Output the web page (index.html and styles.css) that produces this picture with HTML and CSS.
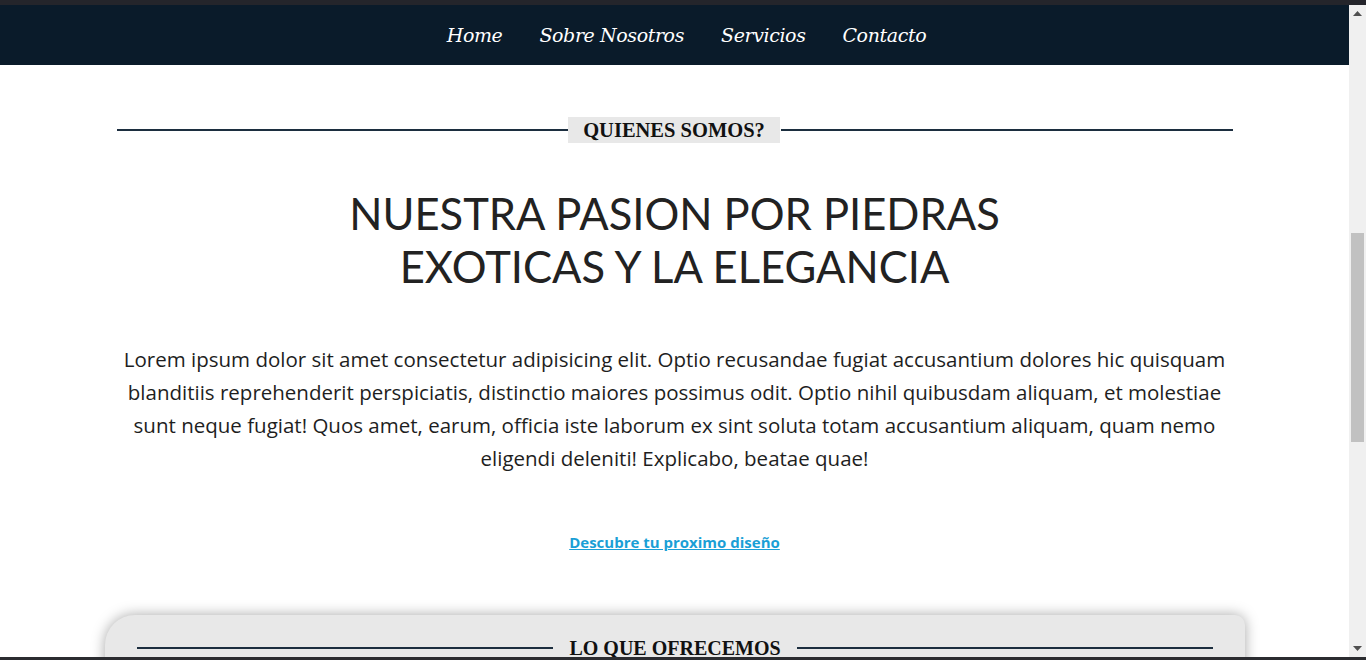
FILE: index.html
```html
<!DOCTYPE html>
<html lang="es">
<head>
<meta charset="utf-8">
<title>Quienes somos</title>
<link rel="stylesheet" href="styles.css">
</head>
<body>
<div class="screen">
  <div class="top-strip"></div>
  <div class="viewport">
    <div class="page">
      <nav class="nav">
        <a href="#" class="nav-link">Home</a>
        <a href="#" class="nav-link">Sobre Nosotros</a>
        <a href="#" class="nav-link">Servicios</a>
        <a href="#" class="nav-link">Contacto</a>
      </nav>
      <section class="about">
        <div class="section-title">
          <span class="rule"></span>
          <h3 class="section-label boxed">QUIENES SOMOS?</h3>
          <span class="rule"></span>
        </div>
        <h1 class="headline">NUESTRA PASION POR PIEDRAS<br>EXOTICAS Y LA ELEGANCIA</h1>
        <p class="lead">Lorem ipsum dolor sit amet consectetur adipisicing elit. Optio recusandae fugiat accusantium dolores hic quisquam blanditiis reprehenderit perspiciatis, distinctio maiores possimus odit. Optio nihil quibusdam aliquam, et molestiae sunt neque fugiat! Quos amet, earum, officia iste laborum ex sint soluta totam accusantium aliquam, quam nemo eligendi deleniti! Explicabo, beatae quae!</p>
        <a href="#" class="cta">Descubre tu proximo diseño</a>
      </section>
      <section class="offer">
        <div class="section-title offer-title">
          <span class="rule"></span>
          <h3 class="section-label">LO QUE OFRECEMOS</h3>
          <span class="rule"></span>
        </div>
      </section>
    </div>
    <div class="scrollbar">
      <div class="sb-btn"><svg width="9" height="5" viewBox="0 0 9 5"><path d="M0 5 L4.5 0 L9 5 Z" fill="#505050"/></svg></div>
      <div class="sb-track">
        <div class="sb-thumb"></div>
      </div>
      <div class="sb-btn"><svg width="9" height="5" viewBox="0 0 9 5"><path d="M0 0 L4.5 5 L9 0 Z" fill="#505050"/></svg></div>
    </div>
  </div>
  <div class="bottom-strip"></div>
</div>
</body>
</html>
```

FILE: styles.css
```css
* { box-sizing: border-box; }
html, body { margin: 0; padding: 0; }
body {
  width: 1366px;
  height: 660px;
  overflow: hidden;
  background: #ffffff;
  font-family: "Open Sans", "Noto Sans", sans-serif;
  color: #222222;
}
.screen {
  display: flex;
  flex-direction: column;
  height: 660px;
}
.top-strip {
  height: 5px;
  background: #24252b;
  flex: none;
}
.bottom-strip {
  height: 3px;
  background: #2b2c30;
  flex: none;
}
.viewport {
  flex: 1;
  display: flex;
  min-height: 0;
}
.page {
  flex: 1;
  overflow: hidden;
  background: #ffffff;
}
.nav {
  height: 60px;
  background: #0a1b2a;
  display: flex;
  justify-content: center;
  align-items: center;
  gap: 37px;
  padding-left: 24px;
}
.nav-link {
  font-family: "DejaVu Serif", "Liberation Serif", serif;
  font-style: italic;
  font-size: 19px;
  color: #ffffff;
  text-decoration: none;
  letter-spacing: -0.4px;
}
.about {
  width: 1116px;
  margin: 0 auto;
  padding-top: 52px;
  display: flex;
  flex-direction: column;
  align-items: center;
}
.section-title {
  width: 100%;
  display: flex;
  align-items: center;
}
.rule {
  flex: 1;
  height: 2px;
  background: #1c2e3f;
}
.section-label {
  margin: 0;
  font-family: "Liberation Serif", "DejaVu Serif", serif;
  font-weight: bold;
  font-size: 20.5px;
  line-height: 26px;
  color: #111111;
  padding: 0 15px;
  white-space: nowrap;
}
.boxed {
  background: #e8e8e8;
  margin: 0 1px 0 0;
}
.headline {
  margin: 44px 0 0;
  font-family: "Lato", "Open Sans", sans-serif;
  font-weight: 400;
  font-size: 43.5px;
  line-height: 53px;
  text-align: center;
  color: #222222;
}
.lead {
  margin: 50px 0 0;
  width: 1116px;
  font-family: "Open Sans", "Noto Sans", sans-serif;
  font-size: 20.5px;
  line-height: 33px;
  text-align: center;
  color: #1e1e1e;
}
.cta {
  margin-top: 57px;
  font-family: "Open Sans", sans-serif;
  font-weight: 700;
  font-size: 15px;
  color: #1a9fd6;
  text-decoration: underline;
}
.offer {
  width: 1140px;
  margin: 63px 0 0 105px;
  height: 120px;
  background: #e8e8e8;
  border-radius: 30px 10px 0 0;
  box-shadow: 0 0 14px rgba(0, 0, 0, 0.35);
  padding: 20px 32px 0 32px;
}
.offer-title .section-label {
  font-size: 20px;
  padding: 0 16px;
}
.scrollbar {
  width: 17px;
  flex: none;
  background: #f0f0f0;
  display: flex;
  flex-direction: column;
}
.sb-btn {
  height: 17px;
  display: flex;
  align-items: center;
  justify-content: center;
  flex: none;
}
.sb-track {
  flex: 1;
  padding: 211px 2px 0 2px;
}
.sb-thumb {
  height: 209px;
  background: #c1c1c1;
}
```
